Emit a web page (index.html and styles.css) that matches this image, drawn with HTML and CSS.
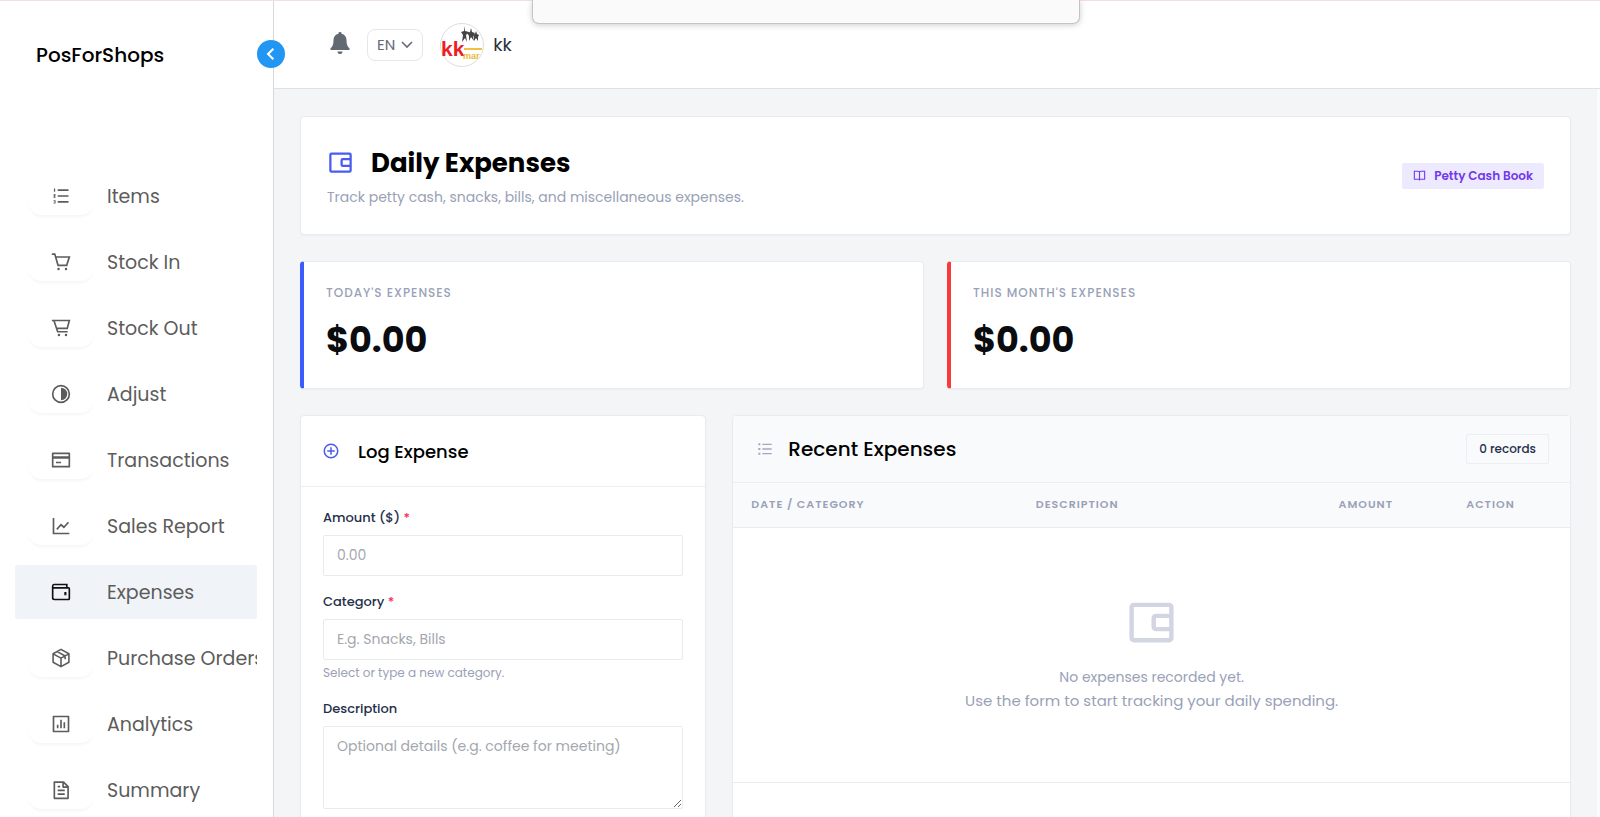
FILE: index.html
```html
<!DOCTYPE html>
<html lang="en">
<head>
	<title>Daily Expenses - PosForShops</title>
	<meta charset="utf-8">
	<meta name="viewport" content="width=device-width, initial-scale=1">
	<link rel="stylesheet" href="styles.css">
</head>
<body>
	<!-- shared wallet icon -->
	<svg class="sprite" aria-hidden="true">
		<symbol id="wallet" viewBox="0 0 24 24">
			<path d="M4 3h16a2 2 0 0 1 2 2v14a2 2 0 0 1-2 2H4a2 2 0 0 1-2-2V5a2 2 0 0 1 2-2zm16 5V5H4v14h16v-3h-6a2 2 0 0 1-2-2v-4a2 2 0 0 1 2-2h6zm-6 2v4h6v-4h-6z"/>
		</symbol>
	</svg>

	<div class="notice"></div>

	<div class="app">
		<aside class="sidebar">
			<div class="brand">PosForShops</div>
			<button class="toggle" type="button" aria-label="Collapse menu">
				<svg viewBox="0 0 24 24"><path d="M16 3l-9 9 9 9" fill="none" stroke="currentColor" stroke-width="3.6"/></svg>
			</button>
			<nav class="menu">
				<a href="#" class="item">
					<span class="plate"><svg viewBox="0 0 24 24"><path d="M8 4h13v2H8zM8 11h13v2H8zM8 18h13v2H8zM3.500 3H5v4H3.500zM3 10h2.500v1.500L4.500 13h1v1H3v-1l1-1.500H3zM3 17h2.500v4H3v-1h1.500v-.5H3.500v-1h1V18H3z"/></svg></span>
					<span>Items</span>
				</a>
				<a href="#" class="item">
					<span class="plate"><svg viewBox="0 0 24 24"><path d="M1 2.500h3.500L8.500 16h10.300L22 6H5.500" fill="none" stroke="currentColor" stroke-width="2"/><circle cx="9" cy="20.500" r="1.500"/><circle cx="18" cy="20.500" r="1.500"/></svg></span>
					<span>Stock In</span>
				</a>
				<a href="#" class="item">
					<span class="plate"><svg viewBox="0 0 24 24"><path d="M1 3h21l-2.500 9.500H7M3.500 3l4.500 13.500h12" fill="none" stroke="currentColor" stroke-width="2"/><circle cx="9.500" cy="20.500" r="1.500"/><circle cx="18" cy="20.500" r="1.500"/></svg></span>
					<span>Stock Out</span>
				</a>
				<a href="#" class="item">
					<span class="plate"><svg viewBox="0 0 24 24"><circle cx="12" cy="12" r="10" fill="none" stroke="currentColor" stroke-width="2"/><path d="M12 4.500a7.500 7.500 0 0 1 0 15z"/></svg></span>
					<span>Adjust</span>
				</a>
				<a href="#" class="item">
					<span class="plate"><svg viewBox="0 0 24 24"><path d="M2 4h20v16H2z" fill="none" stroke="currentColor" stroke-width="2" stroke-linejoin="round"/><path d="M2 7.500h20v3H2zM6 14h6v2H6z"/></svg></span>
					<span>Transactions</span>
				</a>
				<a href="#" class="item">
					<span class="plate"><svg viewBox="0 0 24 24"><path d="M3 2.500V21h19M7 16l5-5.500 3.500 3L21 7.500" fill="none" stroke="currentColor" stroke-width="2"/></svg></span>
					<span>Sales Report</span>
				</a>
				<a href="#" class="item active">
					<span class="plate"><svg viewBox="0 0 24 24"><path d="M19 7V3H3.500Q2 3 2 5v14q0 2 2 2h17q1 0 1-1V8q0-1-1-1H2" fill="none" stroke="currentColor" stroke-width="2"/><path d="M16 12h2.500v4H16z"/></svg></span>
					<span>Expenses</span>
				</a>
				<a href="#" class="item">
					<span class="plate"><svg viewBox="0 0 24 24"><path d="M12 1.700l9.500 5.200v10.200L12 22.300l-9.500-5.200V6.900zM2.500 7L12 12.200 21.500 7M12 12v10M7.500 4.400l9.500 5.200v4" fill="none" stroke="currentColor" stroke-width="1.900" stroke-linejoin="round"/></svg></span>
					<span>Purchase Orders</span>
				</a>
				<a href="#" class="item">
					<span class="plate"><svg viewBox="0 0 24 24"><path d="M3 3h18v18H3z" fill="none" stroke="currentColor" stroke-width="2" stroke-linejoin="round"/><path d="M7 13h2v4H7zM11 7h2v10h-2zM15 10h2v7h-2z"/></svg></span>
					<span>Analytics</span>
				</a>
				<a href="#" class="item">
					<span class="plate"><svg viewBox="0 0 24 24"><path d="M4 2.500h11l5.500 5.500v14H4zM14.500 3v5.500H20M8 12.500h8.500M8 17h8.500M8 8h3" fill="none" stroke="currentColor" stroke-width="2" stroke-linejoin="round"/></svg></span>
					<span>Summary</span>
				</a>
			</nav>
		</aside>

		<main class="main">
			<header class="topbar">
				<button class="bell" type="button" aria-label="Notifications">
					<svg viewBox="0 0 20 22"><path d="M10 0a1.500 1.500 0 0 1 1.500 1.800A6.500 6.500 0 0 1 16.500 8c0 4.500 1 6.500 3 8.300V18H.5v-1.700c2-1.800 3-3.800 3-8.300a6.500 6.500 0 0 1 5-6.200A1.500 1.500 0 0 1 10 0zM7.500 19.500h5a2.500 2.500 0 0 1-5 0z"/></svg>
				</button>
				<button class="lang" type="button">EN
					<svg viewBox="0 0 12 8"><path d="M1 1l5 5 5-5" fill="none" stroke="currentColor" stroke-width="1.600"/></svg>
				</button>
				<div class="user">
					<svg class="avatar" viewBox="0 0 44 44">
						<circle cx="22" cy="22" r="21.500" fill="#fff" stroke="#ddd"/>
						<text class="logo-k" x="1" y="33" font-size="21">kk</text>
						<path d="M24 25h18v2H24z" fill="#f0c040"/>
						<text class="logo-mart" x="23" y="36" font-size="9">mar</text>
						<path d="M24 3l1 5 4 1-3 3 1 7-2-4-3 4 1-7-2-3 3-1zM31 5l1 4 3 1-2 3 1 5-3-4-2 4v-5l-2-3 3-1zM36 8l1 3 2 1-1 2v4l-2-3-2 3v-4l-1-2 2-1z" fill="#444"/>
					</svg>
					<span>kk</span>
				</div>
			</header>

			<div class="content">
				<section class="card page-head">
					<div>
						<h1><svg viewBox="0 0 24 24"><use href="#wallet"/></svg>Daily Expenses</h1>
						<p>Track petty cash, snacks, bills, and miscellaneous expenses.</p>
					</div>
					<span class="tag">
						<svg viewBox="0 0 24 24"><path d="M12 5v16M12 19H2.500V4H9q3 0 3 2 0-2 3-2h6.500v15H12" fill="none" stroke="currentColor" stroke-width="2"/></svg>
						Petty Cash Book
					</span>
				</section>

				<section class="stats">
					<div class="card stat today">
						<h2>Today's Expenses</h2>
						<strong>$0.00</strong>
					</div>
					<div class="card stat month">
						<h2>This Month's Expenses</h2>
						<strong>$0.00</strong>
					</div>
				</section>

				<div class="columns">
					<section class="card log">
						<h2><svg viewBox="0 0 24 24"><path d="M12 7v10M7 12h10" stroke="currentColor" stroke-width="2"/><circle cx="12" cy="12" r="9" fill="none" stroke="currentColor" stroke-width="2"/></svg>Log Expense</h2>
						<form>
							<label for="amount">Amount ($) <span class="req">*</span></label>
							<input type="text" id="amount" name="amount" placeholder="0.00">
							<label for="category">Category <span class="req">*</span></label>
							<input type="text" id="category" name="category" placeholder="E.g. Snacks, Bills">
							<small>Select or type a new category.</small>
							<label for="description">Description</label>
							<textarea id="description" name="description" placeholder="Optional details (e.g. coffee for meeting)"></textarea>
						</form>
					</section>

					<section class="card recent">
						<div class="recent-head">
							<h2><svg viewBox="0 0 24 24"><path d="M8 4h14v2H8zM8 11h14v2H8zM8 18h14v2H8zM2 3.500h3v3H2zM2 10.500h3v3H2zM2 17.500h3v3H2z"/></svg>Recent Expenses</h2>
							<span class="count">0 records</span>
						</div>
						<table>
							<thead>
								<tr>
									<th class="c-date">Date / Category</th>
									<th>Description</th>
									<th class="c-amount">Amount</th>
									<th class="c-action">Action</th>
								</tr>
							</thead>
							<tbody>
								<tr>
									<td colspan="4">
										<svg viewBox="0 0 24 24"><use href="#wallet"/></svg>
										<p>No expenses recorded yet.</p>
										<p class="hint">Use the form to start tracking your daily spending.</p>
									</td>
								</tr>
							</tbody>
						</table>
					</section>
				</div>
			</div>
		</main>
	</div>
</body>
</html>
```

FILE: styles.css
```css
* {
	box-sizing: border-box;
}
body {
	margin: 0;
	font-family: Poppins, Inter, "Open Sans", sans-serif;
	color: #000;
	background-color: #fff;
	overflow: hidden;
}
h1, h2, p {
	margin: 0;
}
svg {
	fill: currentColor;
	flex-shrink: 0;
}
button, input, textarea {
	font-family: inherit;
}
.sprite {
	display: none;
}

/* panel hanging from the top edge */
.notice {
	position: absolute;
	top: 0;
	left: 50%;
	transform: translateX(-50%);
	margin-left: 6px;
	width: 548px;
	height: 24px;
	z-index: 5;
	background-color: #fafafa;
	border: 1px solid #c4c4c4;
	border-top: none;
	border-radius: 0 0 7px 7px;
	box-shadow: 0 1px 6px rgba(0,0,0,0.2);
}
.app {
	display: flex;
	height: 100vh;
	border-top: 1px solid #f9dde1;
}

/* sidebar */
.sidebar {
	position: relative;
	width: 274px;
	flex-shrink: 0;
	border-right: 1px solid #d5d8dc;
}
.brand {
	height: 168px;
	padding: 39px 36px 0;
	font-size: 20px;
	line-height: 30px;
	font-weight: 500;
}
.toggle {
	position: absolute;
	top: 39px;
	right: -12px;
	width: 28px;
	height: 28px;
	padding: 0;
	border: none;
	border-radius: 50%;
	background-color: #2196f3;
	color: #fff;
	display: flex;
	align-items: center;
	justify-content: center;
}
.toggle svg {
	width: 14px;
	height: 14px;
}
.menu {
	display: flex;
	flex-direction: column;
	gap: 12px;
	padding: 0 16px 0 15px;
}
.item {
	display: flex;
	align-items: center;
	gap: 13px;
	height: 54px;
	padding-left: 13px;
	border-radius: 3px;
	color: #5c5c5c;
	font-size: 19px;
	text-decoration: none;
	white-space: nowrap;
	overflow: hidden;
}
.plate {
	width: 66px;
	height: 38px;
	flex-shrink: 0;
	display: flex;
	align-items: center;
	justify-content: center;
	border-radius: 14px;
	box-shadow: 0 3px 3px -1px rgba(0,0,0,0.04);
}
.plate svg {
	width: 20px;
	height: 20px;
}
.item.active {
	background-color: #f0f4f8;
}
.item.active .plate {
	color: #111;
	box-shadow: none;
}

/* top bar */
.main {
	flex: 1;
	min-width: 0;
}
.topbar {
	display: flex;
	align-items: center;
	height: 88px;
	padding: 0 56px;
	border-bottom: 1px solid #dfe1e4;
}
.bell {
	padding: 0 0 4px;
	border: none;
	background: none;
	color: #626973;
}
.bell svg {
	display: block;
	width: 20px;
	height: 22px;
}
.lang {
	display: flex;
	align-items: center;
	gap: 6px;
	height: 32px;
	margin: 0 17px;
	padding: 0 9px;
	border: 1px solid #e5e7eb;
	border-radius: 8px;
	background-color: #fff;
	color: #666c76;
	font-size: 15px;
}
.lang svg {
	width: 12px;
	height: 8px;
}
.user {
	display: flex;
	align-items: center;
	gap: 9px;
	color: #2b2f3a;
	font-size: 18px;
}
.avatar {
	width: 44px;
	height: 44px;
}
.logo-k, .logo-mart {
	font-family: "Liberation Sans", sans-serif;
	font-weight: 700;
	fill: #ee1c25;
}
.logo-mart {
	fill: #e9b92f;
}

/* page */
.content {
	display: flex;
	flex-direction: column;
	gap: 26px;
	padding: 27px 26px;
	background-color: #f4f5f7;
	border-right: 3px solid #fafbfb;
}
.card {
	background-color: #fff;
	border: 1px solid #e9ebef;
	border-radius: 4px;
	box-shadow: 0 1px 2px rgba(0,0,0,0.03);
}
.page-head {
	display: flex;
	align-items: center;
	justify-content: space-between;
	height: 119px;
	padding: 0 26px;
}
.page-head h1 {
	display: flex;
	align-items: center;
	gap: 17px;
	font-size: 26px;
	line-height: 40px;
	font-weight: 700;
}
.page-head h1 svg {
	width: 27px;
	height: 27px;
	color: #4a5cf0;
}
.page-head p {
	margin-top: 2px;
	color: #99a1b7;
	font-size: 14px;
	line-height: 24px;
}
.tag {
	display: flex;
	align-items: center;
	gap: 8px;
	height: 26px;
	padding: 0 11px;
	border-radius: 2px;
	background-color: #ede9fe;
	color: #7239ea;
	font-size: 12px;
	font-weight: 600;
}
.tag svg {
	width: 13px;
	height: 13px;
}
.stats {
	display: grid;
	grid-template-columns: 1fr 1fr;
	gap: 23px;
}
.stat {
	height: 128px;
	padding: 21px 22px;
	border-left-width: 4px;
}
.stat.today {
	border-left-color: #3b5bfd;
}
.stat.month {
	border-left-color: #f93a3a;
}
.stat h2 {
	color: #99a1b7;
	font-size: 12px;
	line-height: 20px;
	font-weight: 500;
	letter-spacing: 1px;
	text-transform: uppercase;
}
.stat strong {
	display: block;
	margin-top: 10px;
	font-size: 35px;
	line-height: 54px;
	font-weight: 700;
	color: #0b0c10;
}
.columns {
	display: grid;
	grid-template-columns: repeat(3, 1fr);
	gap: 26px;
	align-items: start;
}

/* log expense form */
.log h2 {
	display: flex;
	align-items: center;
	gap: 18px;
	height: 71px;
	padding: 0 21px;
	border-bottom: 1px solid #eceef1;
	font-size: 18px;
	font-weight: 500;
}
.log h2 svg {
	width: 18px;
	height: 18px;
	color: #4a5cf0;
}
.log form {
	display: flex;
	flex-direction: column;
	padding: 21px 22px;
}
.log label {
	margin-bottom: 7px;
	color: #252f4a;
	font-size: 13px;
	line-height: 20px;
	font-weight: 500;
}
.req {
	color: #f8285a;
}
.log input, .log textarea {
	width: 100%;
	padding: 8px 13px;
	border: 1px solid #e8eaee;
	border-radius: 2px;
	background-color: #fff;
	font-size: 14px;
	line-height: 22px;
}
.log input {
	height: 41px;
	margin-bottom: 16px;
}
.log input:has(+ small) {
	margin-bottom: 3px;
}
.log textarea {
	display: block;
	height: 83px;
	resize: vertical;
}
.log ::placeholder {
	color: #a3a7ae;
}
.log small {
	margin-bottom: 16px;
	color: #99a1b7;
	font-size: 12px;
	line-height: 20px;
}

/* recent expenses */
.recent {
	grid-column: span 2;
	min-height: 460px;
	overflow: hidden;
}
.recent-head {
	display: flex;
	align-items: center;
	justify-content: space-between;
	height: 67px;
	padding: 0 21px 0 24px;
	border-bottom: 1px solid #eceef1;
	background-color: #f9fafc;
}
.recent-head h2 {
	display: flex;
	align-items: center;
	gap: 15px;
	font-size: 20px;
	font-weight: 500;
}
.recent-head svg {
	width: 16px;
	height: 16px;
	color: #a5a9c0;
}
.count {
	padding: 3px 12px;
	border: 1px solid #eceef2;
	border-radius: 2px;
	color: #252f4a;
	font-size: 12px;
	line-height: 22px;
	font-weight: 500;
}
table {
	width: 100%;
	border-collapse: collapse;
	table-layout: fixed;
}
th {
	height: 44px;
	padding: 0 18px;
	border-bottom: 1px solid #e9ebef;
	background-color: #f9fafc;
	color: #99a1b7;
	font-size: 11px;
	font-weight: 600;
	letter-spacing: 1px;
	text-align: left;
	text-transform: uppercase;
}
.c-date {
	width: 34%;
}
.c-amount {
	width: 20%;
	text-align: right;
}
.c-action {
	width: 19%;
	text-align: center;
}
td {
	height: 255px;
	padding: 0;
	border-bottom: 1px solid #e9ebef;
	color: #99a1b7;
	font-size: 14px;
	line-height: 24px;
	text-align: center;
}
td svg {
	display: block;
	width: 53px;
	height: 53px;
	margin: 0 auto 16px;
	color: #d2d5e2;
}
td .hint {
	font-size: 15px;
}
```
